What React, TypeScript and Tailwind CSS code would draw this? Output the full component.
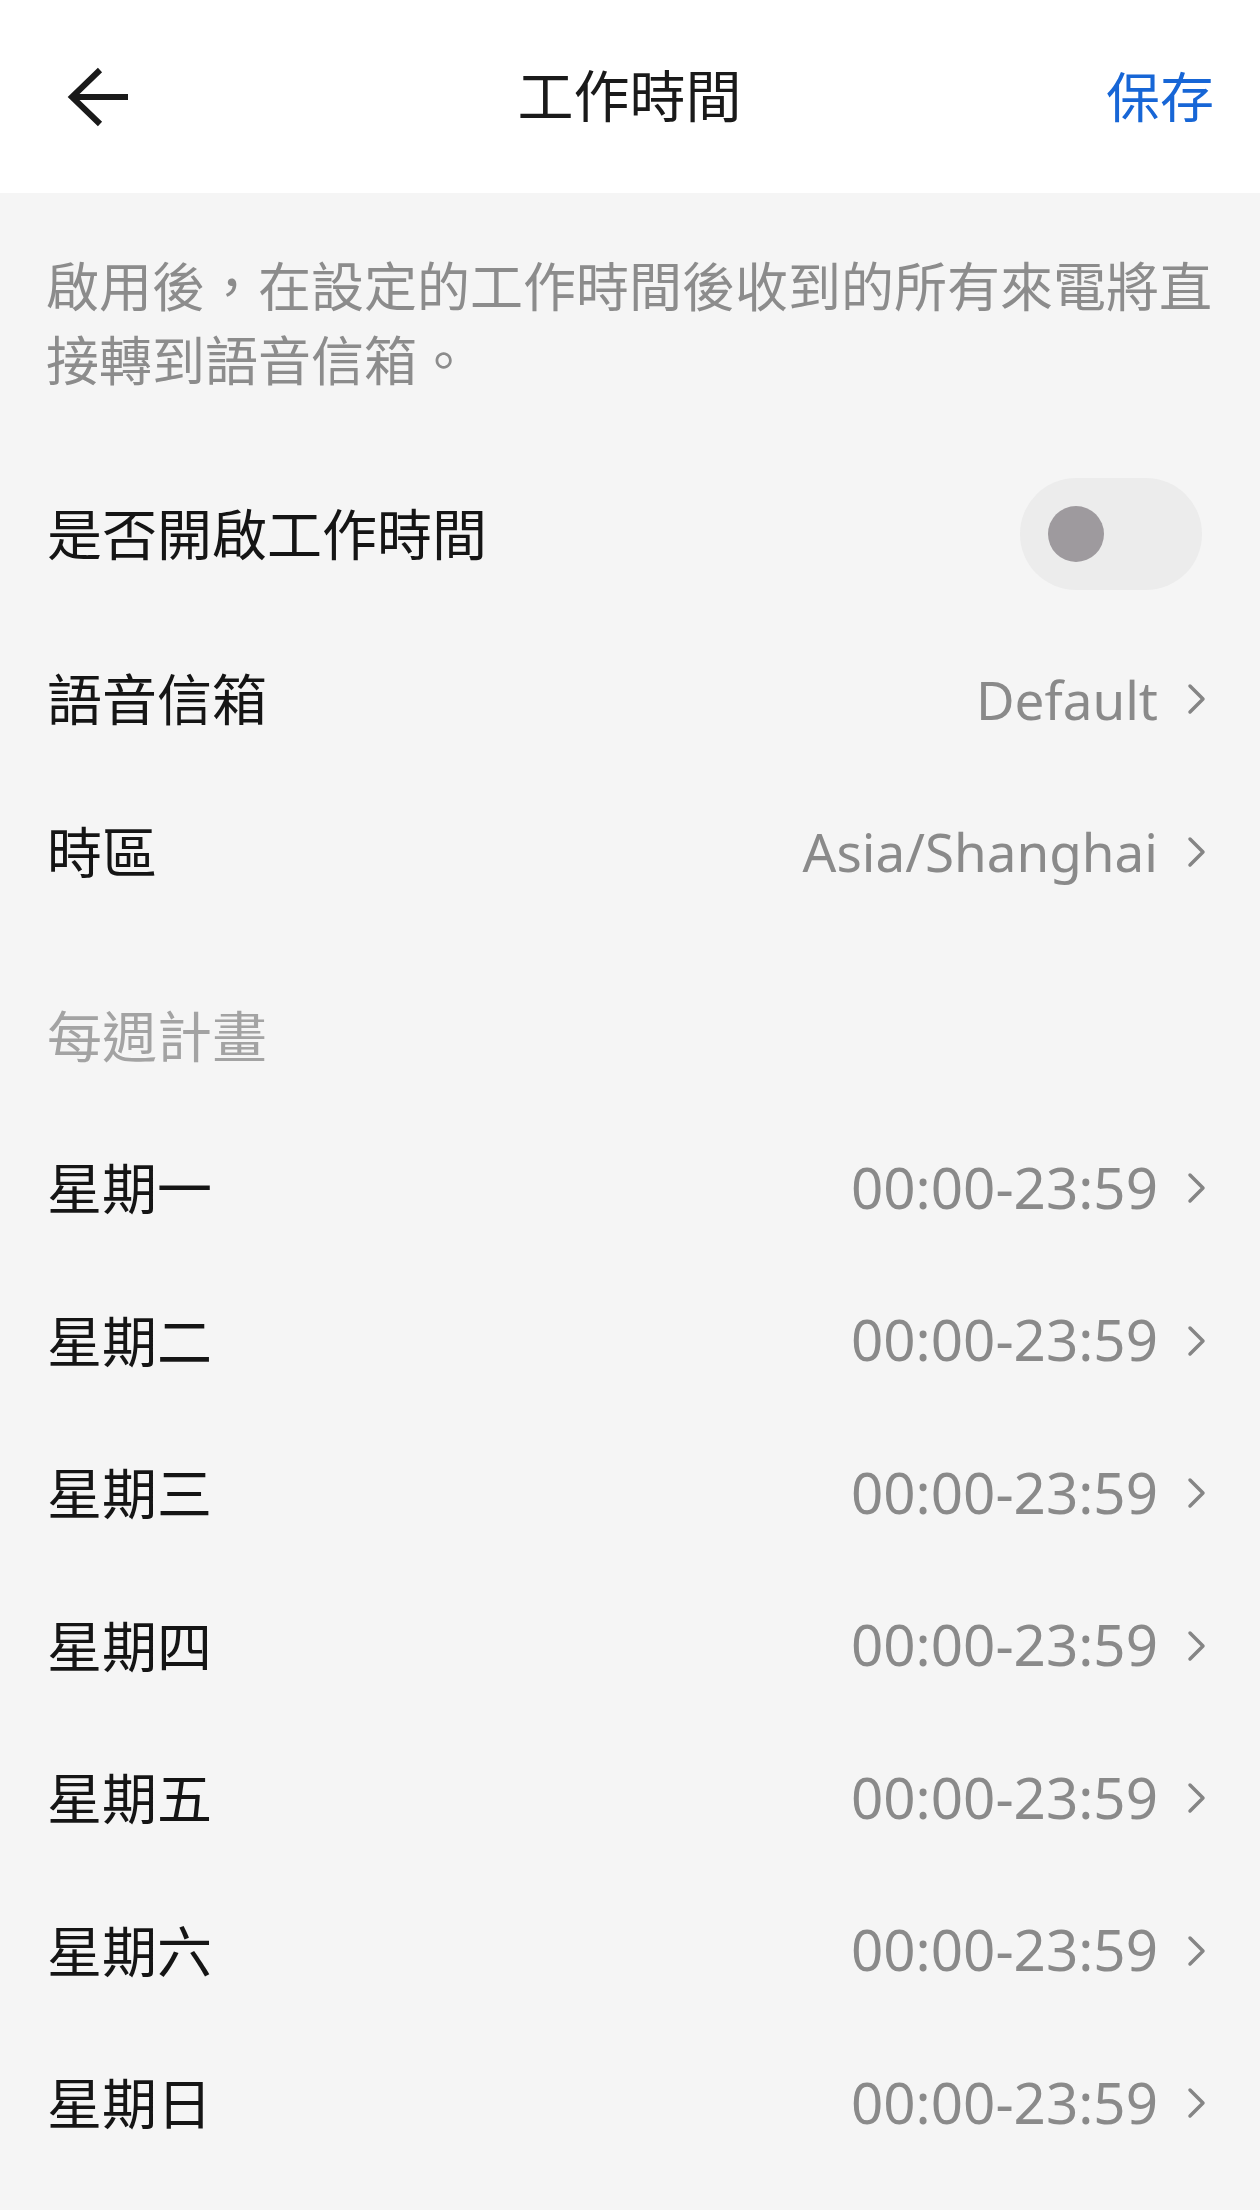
import React from "react";

const days = ["星期一", "星期二", "星期三", "星期四", "星期五", "星期六", "星期日"];

function Chevron() {
  return (
    <svg width="22" height="32" viewBox="0 0 22 32" className="ml-[28px] shrink-0">
      <path d="M4 3 L17 16 L4 29" fill="none" stroke="#858585" strokeWidth="3.5" strokeLinecap="round" strokeLinejoin="round" />
    </svg>
  );
}

function LinkRow({
  label,
  value,
  valueSize,
  className,
}: {
  label: string;
  value: string;
  valueSize: string;
  className?: string;
}) {
  return (
    <div className={"flex items-center justify-between h-[152.5px] pl-[47px] pr-[52px] " + (className ?? "")}>
      <span className="text-[55px] text-[#151515]">{label}</span>
      <div className="flex items-center">
        <span className={valueSize + " text-[#8a8a8a]"}>{value}</span>
        <Chevron />
      </div>
    </div>
  );
}

export default function App() {
  return (
    <div
      className="w-[1260px] min-h-[2210px] bg-[#f5f5f5]"
      style={{ fontFamily: '"Noto Sans", "Noto Sans CJK TC", sans-serif' }}
    >
      {/* header */}
      <div className="h-[193px] bg-white flex items-center pl-[66px] pr-[46px]">
        <div className="flex-1">
          <svg width="64" height="62" viewBox="0 0 64 62">
            <path d="M34 4 L6 31 L34 58 M6 31 L62 31" fill="none" stroke="#1a1a1a" strokeWidth="6" strokeLinejoin="miter" />
          </svg>
        </div>
        <span className="text-[56px] text-[#1a1a1a] leading-none -mt-[4px] mr-[21px]">工作時間</span>
        <div className="flex-1 flex justify-end">
          <span className="text-[54px] text-[#1766d6] leading-none">保存</span>
        </div>
      </div>

      {/* description */}
      <p className="pt-[57px] pl-[46px] pr-[40px] text-[53px] leading-[74px] text-[#8c8c8c]">
        啟用後，在設定的工作時間後收到的所有來電將直接轉到語音信箱。
      </p>

      {/* toggle */}
      <div className="mt-[60px] flex items-center justify-between h-[152px] pl-[47px] pr-[58px]">
        <span className="text-[55px] text-[#151515]">是否開啟工作時間</span>
        <div className="w-[182px] h-[112px] rounded-full bg-[#ececec] flex items-center pl-[28px]">
          <div className="w-[56px] h-[56px] rounded-full bg-[#9e9a9e]" />
        </div>
      </div>

      <LinkRow label="語音信箱" value="Default" valueSize="text-[53px]" className="mt-[13px]" />
      <LinkRow label="時區" value="Asia/Shanghai" valueSize="text-[53px]" />

      <div className="mt-[32px] h-[152px] flex items-center pl-[47px]">
        <span className="text-[55px] text-[#a3a3a3]">每週計畫</span>
      </div>

      {days.map((d) => (
        <LinkRow key={d} label={d} value="00:00-23:59" valueSize="text-[56.5px]" />
      ))}
    </div>
  );
}
